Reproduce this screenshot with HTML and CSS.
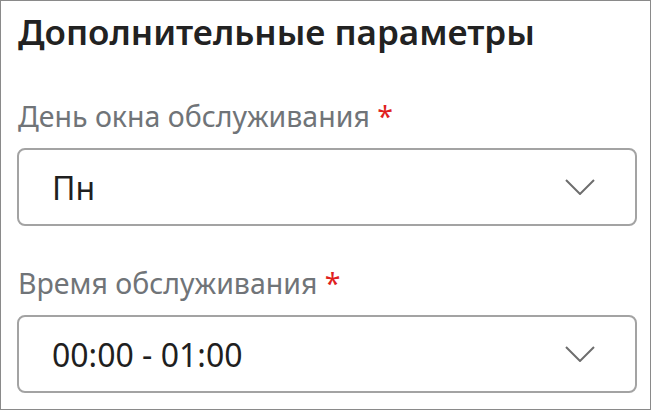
FILE: index.html
```html
<!DOCTYPE html>
<html lang="ru">
<head>
    <meta charset="UTF-8">
    <meta name="viewport" content="width=device-width, initial-scale=1.0">
    <title>Дополнительные параметры</title>
    <link rel="stylesheet" href="styles.css">
</head>
<body>
    <div class="panel">
        <h2>Дополнительные параметры</h2>

        <div class="field">
            <label>День окна обслуживания <span class="req">*</span></label>
            <div class="select">
                <span class="value">Пн</span>
                <svg class="chevron" width="30" height="16" viewBox="0 0 30 16">
                    <path d="M1 1 L15 15 L29 1" fill="none" stroke="#6e6e6e" stroke-width="2"/>
                </svg>
            </div>
        </div>

        <div class="field">
            <label>Время обслуживания <span class="req">*</span></label>
            <div class="select">
                <span class="value">00:00 - 01:00</span>
                <svg class="chevron" width="30" height="16" viewBox="0 0 30 16">
                    <path d="M1 1 L15 15 L29 1" fill="none" stroke="#6e6e6e" stroke-width="2"/>
                </svg>
            </div>
        </div>
    </div>
</body>
</html>
```

FILE: styles.css
```css
html, body {
    margin: 0;
    padding: 0;
    background: #fff;
}

body {
    font-family: "Noto Sans", sans-serif;
    color: #212121;
}

.panel {
    box-sizing: border-box;
    width: 651px;
    height: 410px;
    border: 1px solid #8a8a8a;
    padding: 7px 13px 0 16px;
}

h2 {
    margin: 0;
    font-size: 35px;
    font-weight: 600;
    line-height: 48px;
    color: #222;
    padding-left: 1px;
}

.field {
    margin-top: 43px;
}

.field + .field {
    margin-top: 40px;
}

label {
    display: block;
    font-size: 28.5px;
    line-height: 34px;
    color: #707478;
    padding-left: 1px;
    margin-bottom: 15px;
}

.req {
    color: #e01f1f;
}

.select {
    display: flex;
    align-items: center;
    justify-content: space-between;
    height: 78px;
    box-sizing: border-box;
    border: 2px solid #a3a3a3;
    border-radius: 8px;
    padding: 0 40px 0 33px;
}

.value {
    font-size: 32px;
    color: #1f1f1f;
}

.chevron {
    display: block;
}
```
